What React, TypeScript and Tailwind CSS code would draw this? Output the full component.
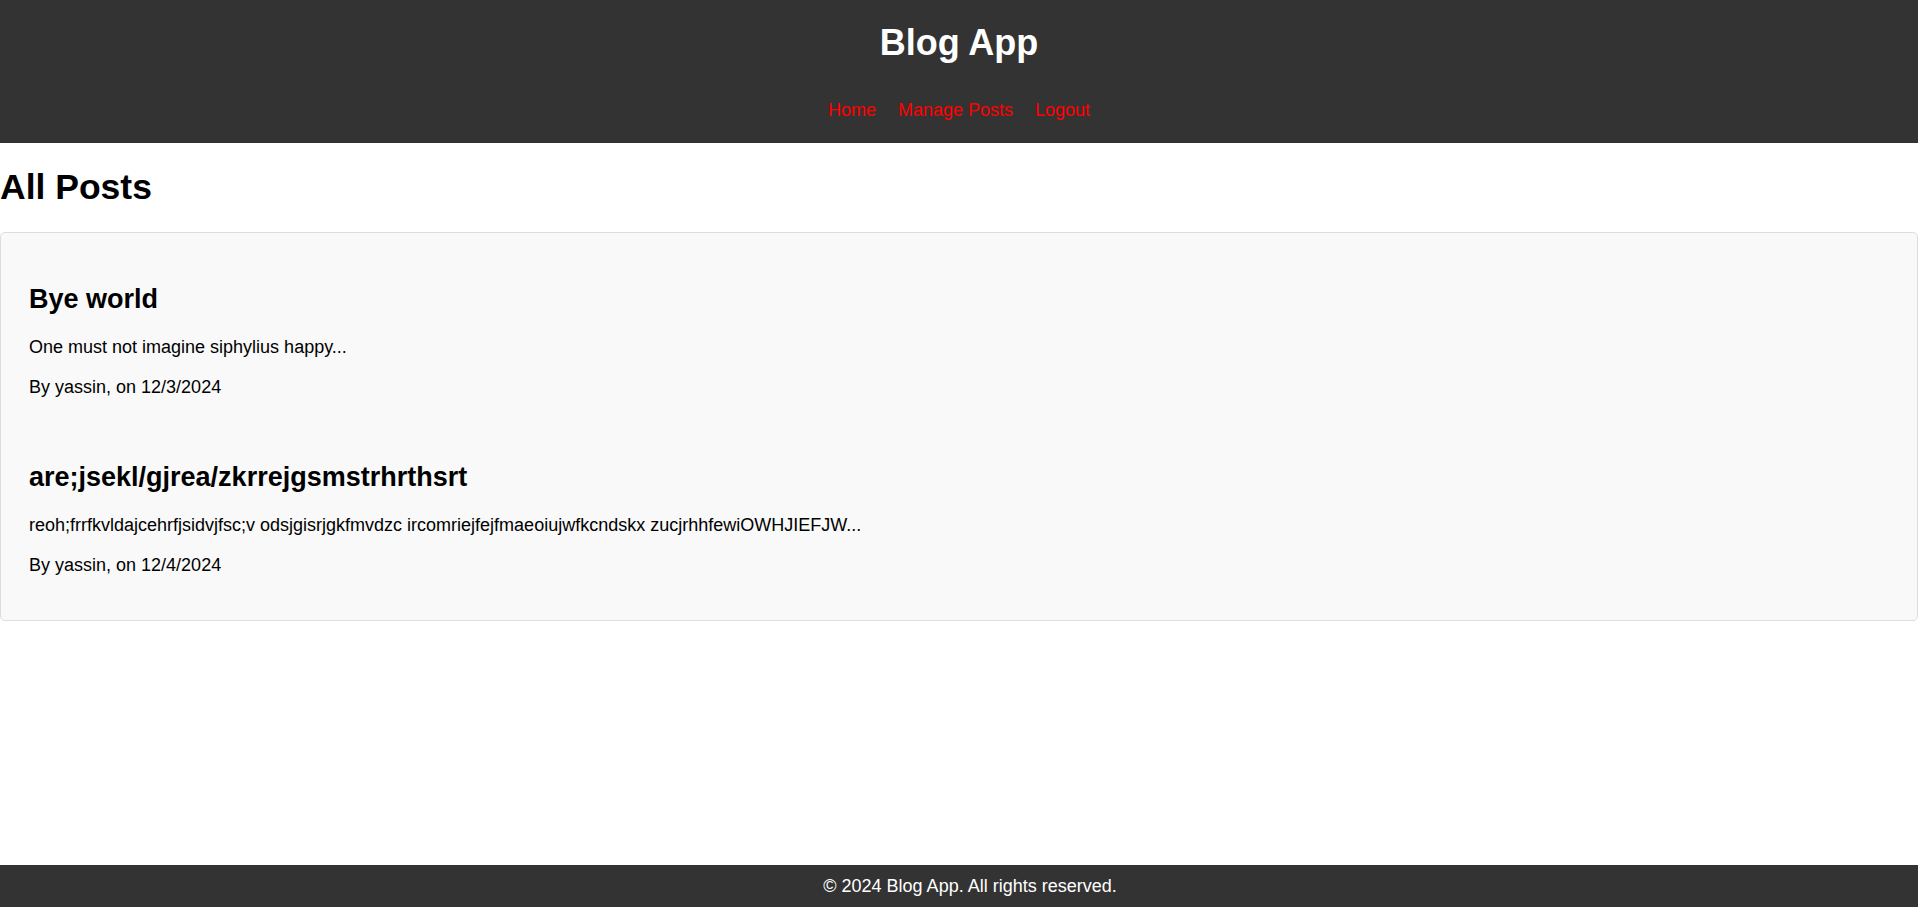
const posts = [
  {
    title: "Bye world",
    excerpt: "One must not imagine siphylius happy...",
    author: "yassin",
    date: "12/3/2024",
  },
  {
    title: "are;jsekl/gjrea/zkrrejgsmstrhrthsrt",
    excerpt:
      "reoh;frrfkvldajcehrfjsidvjfsc;v odsjgisrjgkfmvdzc ircomriejfejfmaeoiujwfkcndskx zucjrhhfewiOWHJIEFJW...",
    author: "yassin",
    date: "12/4/2024",
  },
];

function Header() {
  return (
    <header className="bg-[#333333] pt-[23px] pb-[23px] flex flex-col items-center">
      <h1 className="text-white text-[36px] font-bold leading-[40px]">Blog App</h1>
      <nav className="mt-[37px] flex text-[18px] leading-[20px]">
        <a href="#" className="mx-[11px] text-[#ff0000]">Home</a>
        <a href="#" className="mx-[11px] text-[#ff0000]">Manage Posts</a>
        <a href="#" className="mx-[11px] text-[#ff0000]">Logout</a>
      </nav>
    </header>
  );
}

function PostItem({ post, last }: { post: (typeof posts)[number]; last: boolean }) {
  return (
    <div className={`flex flex-col ${last ? "" : "mb-[64px]"}`}>
      <h2 className="text-[27px] font-bold leading-[30px] mt-[1px]">{post.title}</h2>
      <p className="mt-[23px] text-[18px] leading-[20px]">{post.excerpt}</p>
      <p className="mt-[20px] text-[18px] leading-[20px]">
        By {post.author}, on {post.date}
      </p>
    </div>
  );
}

export default function App() {
  return (
    <div
      className="min-h-screen flex flex-col bg-white text-black"
      style={{ fontFamily: '"Liberation Sans", Arial, sans-serif' }}
    >
      <Header />
      <main className="flex-1">
        <h1 className="mt-[24px] text-[35.5px] font-bold leading-[40px]">All Posts</h1>
        <div className="mt-[25px] border border-[#dddddd] rounded-[5px] bg-[#f9f9f9] pt-[50px] pb-[45px] px-[28px]">
          {posts.map((p, i) => (
            <PostItem key={i} post={p} last={i === posts.length - 1} />
          ))}
        </div>
      </main>
      <footer className="bg-[#333333] h-[42px] pl-[22px] flex items-center justify-center text-white text-[18px] leading-[20px]">
        © 2024 Blog App. All rights reserved.
      </footer>
    </div>
  );
}
